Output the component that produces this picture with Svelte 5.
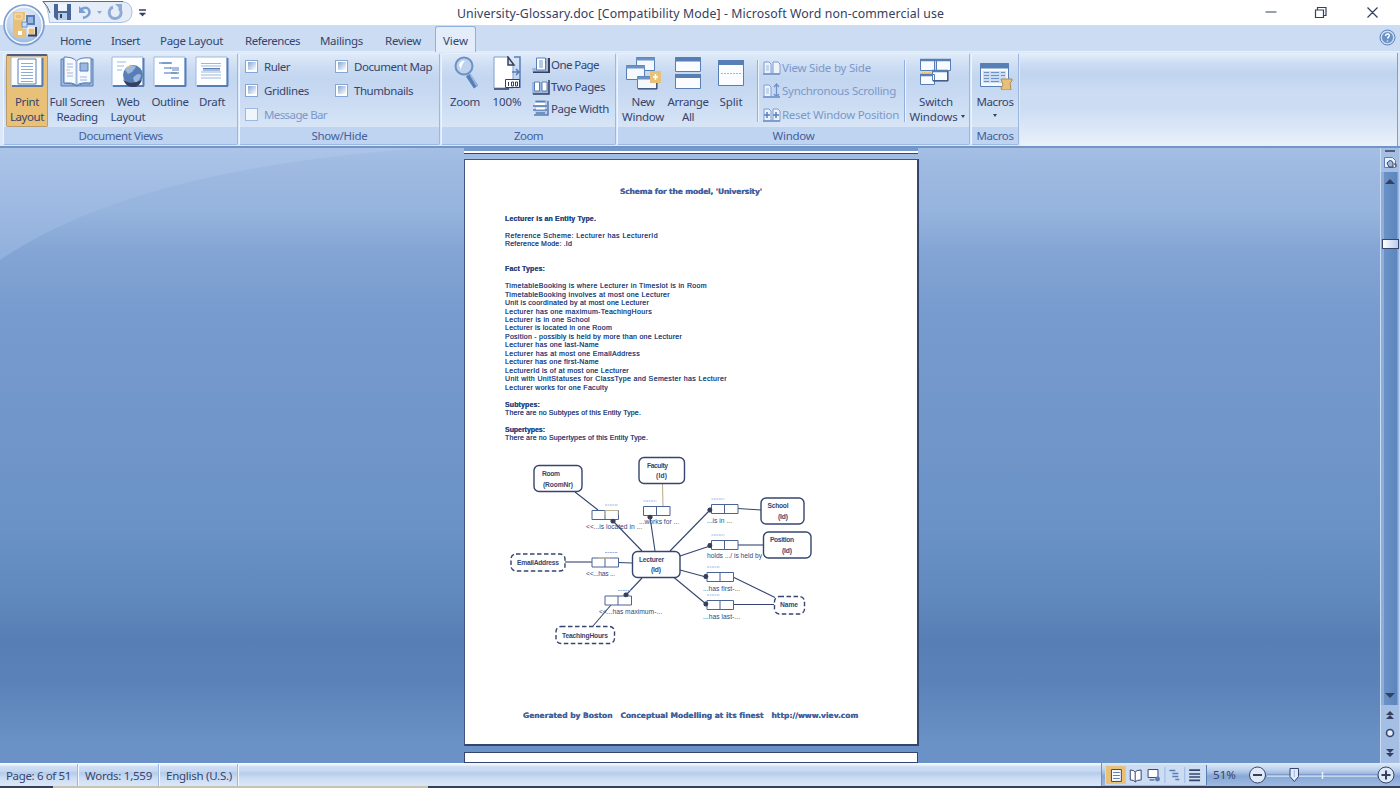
<script>
  // Adjusts tracking so a label occupies its design width.
  function fit(node, w) {
    if (!w) return;
    const n = node.textContent.length;
    const natural = node.getBoundingClientRect().width;
    node.style.letterSpacing = (w - natural) / n + 'px';
  }
  const tabs = [['Home', 31, 60], ['Insert', 29, 20], ['Page Layout', 63, 20], ['References', 55, 22], ['Mailings', 43, 20], ['Review', 36, 22]];
  const lines = [
    ['Lecturer is an Entity Type.', 91, 1], [], ['Reference Scheme: Lecturer has LecturerId', 153], ['Reference Mode: .Id', 67], [], [],
    ['Fact Types:', 40, 1], [],
    ['TimetableBooking is where Lecturer in Timeslot is in Room', 202], ['TimetableBooking involves at most one Lecturer', 165],
    ['Unit is coordinated by at most one Lecturer', 144], ['Lecturer has one maximum-TeachingHours', 147], ['Lecturer is in one School', 85],
    ['Lecturer is located in one Room', 107], ['Position - possibly is held by more than one Lecturer', 177], ['Lecturer has one last-Name', 94],
    ['Lecturer has at most one EmailAddress', 135], ['Lecturer has one first-Name', 94], ['LecturerId is of at most one Lecturer', 124],
    ['Unit with UnitStatuses for ClassType and Semester has Lecturer', 222], ['Lecturer works for one Faculty', 103], [],
    ['Subtypes:', 35, 1], ['There are no Subtypes of this Entity Type.', 136], [], ['Supertypes:', 40, 1], ['There are no Supertypes of this Entity Type.', 143]
  ];
  const entities = [
    [534, 465.5, 48, 26, 'Room', 542, 476, 18, '(RoomNr)', 543, 486.5, 30],
    [639, 457.5, 45.5, 26, 'Faculty', 647, 467.5, 21, '(Id)', 656, 478, 11],
    [632.5, 551.5, 47.5, 26, 'Lecturer', 639, 561.5, 25, '(Id)', 651, 572, 10],
    [761, 498, 43, 26, 'School', 767.5, 508, 21, '(Id)', 778, 519, 10],
    [763.5, 532, 47.5, 26, 'Position', 770, 542, 24, '(Id)', 782, 553, 10]
  ];
  const values = [[511, 554, 54, 17, 'EmailAddress', 517, 564.5, 42], [556, 626.5, 58.5, 17, 'TeachingHours', 562, 637.5, 46], [774.5, 596.5, 30, 17.5, 'Name', 780, 607, 18]];
  const roles = [
    [592, 510.5, 605, '<<...is located in ...', 586, 529, 56], [643.5, 506.5, 643.5, '...works for ...', 639, 524, 40],
    [592, 558, 605, '<<...has ...', 586, 575.5, 29], [605, 596, 618, '<<...has maximum-...', 599, 613.5, 63],
    [711.5, 504.5, 711.5, '...is in ...', 707, 522.5, 25], [711.5, 540.5, 711.5, 'holds .../ is held by', 707, 558, 55],
    [707, 572.5, 707, '...has first-...', 703, 590.5, 37], [707, 600.5, 707, '...has last-...', 703, 618.5, 37]
  ];
  const links = [[575, 492, 598, 510], [613, 521, 642, 551], [650, 517, 655, 551], [565, 562, 592, 562], [618, 562.5, 632, 563], [626, 595, 642, 578], [611, 605, 593, 626], [710, 510, 670, 551], [738, 508.5, 761, 510], [710, 546, 680, 556], [738, 545, 763, 545], [706, 577, 680, 570], [733, 577, 775, 597.5], [706, 604, 674, 577.5], [733, 604.5, 774, 604.5]];
  const dots = [[613, 521], [650, 517], [626, 595], [710, 510], [710, 545.5], [706, 576.5], [706, 604]];
</script>

{#snippet t(text, w)}<span class="t" use:fit={w}>{text}</span>{/snippet}

{#snippet paper()}<path d="M1 1h31v29H1z" fill="#fdfeff" stroke="#9cb8e0" /><path d="M2 30h31M32.500 2v28" stroke="#587fb5" stroke-width="2" />{/snippet}

<div class="app">
  <header class="title">
    <svg class="orb" width="48" height="48" viewBox="0 0 48 48">
      <defs><radialGradient id="og" cx=".5" cy=".3" r=".75"><stop offset="0" stop-color="#e4edf9" /><stop offset=".6" stop-color="#bfd3ee" /><stop offset="1" stop-color="#87a8d8" /></radialGradient></defs>
      <circle cx="24" cy="25" r="20" fill="url(#og)" stroke="#7c9fd0" stroke-width="1.500" /><circle cx="24" cy="25" r="18.200" fill="none" stroke="#fff" stroke-width="1.200" />
      <path d="M13 12h12v8h-2v9h3v8h-10l-3-3z" fill="#e8c078" /><path d="M15 14h7v5h-7z" fill="none" stroke="#f7e4bd" /><path d="M18 31h4v4h-4z" fill="#fff" />
      <path d="M27 16h7v8h-7z" fill="#9cb8e0" stroke="#587fb5" stroke-width="2" /><path d="M22 22h5v5h-5z" fill="#cbdcf3" stroke="#6a92c6" />
      <path d="M28 28h7v7h-7z" fill="#e8c078" stroke="#fff" /><path d="M28 35.500h8V27" fill="none" stroke="#35405f" stroke-width="2" />
    </svg>
    <svg class="qat" width="155" height="25" viewBox="0 0 155 25">
      <path d="M43 1.500Q48 6 49.500 22.500H121Q132 22 132 12T121 1.500z" fill="#e4edf8" stroke="#a9c1e4" /><path d="M43 1.500Q48 6 50 13M43 1.500h80" fill="none" stroke="#5a6a8c" />
      <path d="M54 4h17v16H57l-3-3z" fill="#4a6697" /><path d="M58 4h9v7h-9z" fill="#eff5fc" /><path d="M58 13h9v7h-9z" fill="#b6cbea" /><path d="M60 14h2v4h-2z" fill="#35405f" />
      <path d="M80 10q8-5 9.500 1.500Q90 16 83 18" fill="none" stroke="#7c9ed0" stroke-width="2.500" /><path d="M79 6v7h7z" fill="#7c9ed0" /><path d="M97 11h5l-2.500 3z" fill="#8eabd6" />
      <path d="M119 8a6 6 0 1 1-6-1" fill="none" stroke="#8eabd6" stroke-width="3" /><path d="M115 4h7v7z" fill="#8eabd6" />
      <path d="M139 10h7M139.500 13.500h6" stroke="#35405f" stroke-width="1.300" /><path d="M140 13.500h5l-2.500 3z" fill="#35405f" />
    </svg>
    <h1>{@render t('University-Glossary.doc [Compatibility Mode] - Microsoft Word non-commercial use', 487)}</h1>
    <svg class="win" width="120" height="25" viewBox="1265 0 120 25" fill="none" stroke="#35405f" stroke-width="1.200"><path d="M1265.500 12h11M1315.500 10h8v7.500h-8zM1317.500 10V7.500h8.500v8h-2.500M1367.500 7.500l10 10M1377.500 7.500l-10 10" /></svg>
  </header>

  <nav>
    {#each tabs as [n, w, g]}<span class="tab" style="margin-left:{g}px;width:{w}px">{@render t(n, w)}</span>{/each}
    <span class="tab on">{@render t('View', 25)}</span>
    <svg class="help" width="17" height="17" viewBox="0 0 17 17"><circle cx="8.500" cy="8.500" r="7.500" fill="#cbdcf3" stroke="#587fb5" /><circle cx="8.500" cy="8.500" r="5.500" fill="#6a92c6" /><path d="M6.500 7q.5-2.500 2.500-2 2.500.8.500 3L8.500 9.500M8.500 11.500v1" fill="none" stroke="#fff" stroke-width="1.500" /></svg>
  </nav>

  <div class="ribbon">
    <section style="width:235px">
      <div class="body views">
        <button class="big sel" style="width:42px"><svg width="34" height="32">{@render paper()}<path d="M8 3h18v25H8z" fill="#fff" stroke="#587fb5" /><path d="M11 7.500h12M11 10.500h12M11 13.500h12M11 16.500h12M11 19.500h12M11 22.500h12M11 25.500h12" stroke="#8cabd6" /></svg>{@render t('Print', 24)}{@render t('Layout', 34)}</button>
        <button class="big" style="width:58px"><svg width="34" height="32"><path d="M1 3h3v24q8 0 13 3 4-3 13-2V3h3v27H1z" fill="#9cb8e0" stroke="#587fb5" /><path d="M4 1q9 0 12.500 4Q20 1 31 2v25q-10-1-14 2-5-3-13-2z" fill="#f6f9fe" stroke="#587fb5" /><path d="M16.500 5v24" stroke="#9cb8e0" stroke-width="2" /><path d="M7 8h6M7 11h6M7 17h6M7 20h6M20 21h7M20 24h7" stroke="#9cb8e0" /><path d="M20 7h8v8h-8z" fill="#9cb8e0" stroke="#587fb5" /><path d="M6 14h4" stroke="#e8c078" /></svg>{@render t('Full Screen', 55)}{@render t('Reading', 41)}</button>
        <button class="big" style="width:44px"><svg width="34" height="32">{@render paper()}<path d="M6 6h9M6 10h7M6 14h5" stroke="#9cb8e0" /><circle cx="22" cy="19" r="10" fill="#587fb5" /><path d="M14 14q4-7 11-3l-4 5-4 2zM22 22q5-6 8-3-1 6-6 8z" fill="#9cb8e0" /><path d="M12 23q6 7 19 1-3 8-10 7-7-1-9-8z" fill="#35405f" /><path d="M15 12l5-3" stroke="#e8c078" /></svg>{@render t('Web', 23)}{@render t('Layout', 35)}</button>
        <button class="big" style="width:40px"><svg width="34" height="32">{@render paper()}<path d="M6 7h13M11 12h7M11 17h15M18 22h8" stroke="#9cb8e0" stroke-width="2" /><path d="M9 7h9M17 12h9M19 14h7M18 17h6" stroke="#587fb5" /></svg>{@render t('Outline', 37)}</button>
        <button class="big" style="width:44px"><svg width="34" height="32">{@render paper()}<path d="M6 7.500h20M6 10h20M6 16h20M6 19h20M6 22h20" stroke="#9cb8e0" /><path d="M8 12.500h17M8 14h17" stroke="#587fb5" /></svg>{@render t('Draft', 26)}</button>
      </div>
      <footer>{@render t('Document Views', 84)}</footer>
    </section>
    <section style="width:201px">
      <div class="body checks">
        {#each [['Ruler', 26], ['Document Map', 78], ['Gridlines', 45], ['Thumbnails', 59], ['Message Bar', 63]] as [n, w], i}
          <label class:dim={i == 4}><i></i>{@render t(n, w)}</label>
        {/each}
      </div>
      <footer>{@render t('Show/Hide', 56)}</footer>
    </section>
    <section style="width:175px">
      <div class="body" style="padding-left:3px">
        <button class="big" style="width:40px"><svg width="34" height="34"><path d="M20 19l8 12" stroke="#587fb5" stroke-width="5" /><path d="M22 18l7 12" stroke="#9cb8e0" stroke-width="1.500" /><circle cx="16" cy="10" r="8.500" fill="#bfd3ef" stroke="#6a92c6" stroke-width="2" /><path d="M11 9q2-5 6-4-4 4-4 9z" fill="#fff" /></svg>{@render t('Zoom', 30)}</button>
        <button class="big" style="width:44px"><svg width="34" height="34"><path d="M4 1h14l5 7v24H4z" fill="#fff" stroke="#7d9fd0" /><path d="M18 1l6 8h-6zM4 33h15" fill="#cbdcf3" stroke="#35405f" stroke-width="1.500" /><path d="M24 1h6v31M22 16h7m-3-3 3 3-3 3" fill="none" stroke="#587fb5" stroke-width="1.500" /><path d="M15.500 23.500h14v8h-14z" fill="#fff" stroke="#35405f" /><path d="M18.500 26v4M21.500 26v4h2v-4zM25.500 26v4h2v-4z" fill="none" stroke="#35405f" /></svg>{@render t('100%', 29)}</button>
        <div class="list zl">
          <span><svg width="18" height="16"><path d="M0 11h4V1h12v15H1z" fill="#9cb8e0" /><path d="M1 15.500h16V1" fill="none" stroke="#35405f" stroke-width="2" /><path d="M4.500 1h9v12h-9z" fill="#fff" stroke="#587fb5" /><path d="M7 4h4M7 6h4M7 8h4M7 10h4" stroke="#6a92c6" /></svg>{@render t('One Page', 48)}</span>
          <span><svg width="18" height="16"><path d="M0 3h17v12H0z" fill="#9cb8e0" /><path d="M1 15h16V1" fill="none" stroke="#35405f" stroke-width="1.500" /><path d="M2.500 3h5v9h-5zM10 3h5v9h-5z" fill="#fff" stroke="#587fb5" /></svg>{@render t('Two Pages', 54)}</span>
          <span><svg width="18" height="16"><path d="M3 0h13v15H3z" fill="#b6cbea" /><path d="M2 15h14V1" fill="none" stroke="#587fb5" stroke-width="1.500" /><path d="M3.500 1.500h10M1 6h14M1 10h14M4 13h9" stroke="#587fb5" stroke-width="1.400" /><path d="M3 3h10v2H3zM4 7.500h9v2H4z" fill="#fff" /></svg>{@render t('Page Width', 58)}</span>
        </div>
      </div>
      <footer>{@render t('Zoom', 29)}</footer>
    </section>
    <section style="width:353px">
      <div class="body" style="padding-left:1px">
        <button class="big" style="width:48px"><svg width="36" height="34"><g fill="#f5f9fe" stroke="#587fb5"><path d="M11.500 1.500h18v13h-18z" /><path d="M1.500 9.500h18v14h-18z" /><path d="M12.500 20.500h19v12h-19z" /></g><path d="M11 3h19M1 11h19M12 22h20" stroke="#6a92c6" stroke-width="3" /><path d="M13 33h19V21" fill="none" stroke="#35405f" /><path d="M25 15h11v12H25z" fill="#e8c078" /><path d="M30.500 18v6M28 21h5" stroke="#fff" stroke-width="1.500" /></svg>{@render t('New', 23)}{@render t('Window', 42)}</button>
        <button class="big" style="width:42px"><svg width="28" height="34"><path d="M1.500 1.500h25v14h-25zM1.500 18.500h25v14h-25z" fill="#fafcff" stroke="#587fb5" /><path d="M1 3.500h26M1 20h26" stroke="#587fb5" stroke-width="4" /></svg>{@render t('Arrange', 41)}{@render t('All', 12)}</button>
        <button class="big" style="width:44px"><svg width="28" height="34"><path d="M1.500 4.500h25v25h-25z" fill="#fafcff" stroke="#587fb5" /><path d="M1 6.500h26" stroke="#587fb5" stroke-width="5" /><path d="M4 17.500h20" stroke="#9cb8e0" stroke-dasharray="2 1" /></svg>{@render t('Split', 23)}</button>
        <i class="sep" style="margin-left:4px"></i>
        <div class="list wl dim">
          {#each [['View Side by Side', 89], ['Synchronous Scrolling', 114], ['Reset Window Position', 117]] as [n, w], i}
            <span><svg width="18" height="15"><path d="M1 2h5l2 2v10H1z" fill="#edf3fb" stroke="#7c9ed0" />{#if i == 1}<path d="M13.500 1v13M11 4l2.500-3L16 4M11 11l2.500 3 2.500-3" fill="none" stroke="#6a92c6" stroke-width="1.300" />{:else}<path d="M10 2h5l2 2v10h-7z" fill="#edf3fb" stroke="#7c9ed0" />{/if}{#if i == 2}<path d="M1 8h6M4 5v6M10 8h6M13 5v6" stroke="#587fb5" stroke-width="1.500" />{:else}<path d="M3 6h3M3 8h3M3 10h3" stroke="#9cb8e0" />{/if}<path d="M0 14h17" stroke="#7c9ed0" stroke-width="2" /></svg>{@render t(n, w)}</span>
          {/each}
        </div>
        <i class="sep" style="margin-left:-1px"></i>
        <button class="big" style="width:60px"><svg width="34" height="34"><g fill="#f8fbff" stroke="#587fb5"><path d="M1.500 3.500h14v11h-14zM17.500 3.500h14v11h-14z" /><path d="M1.500 18.500h14v10h-14zM13.500 14.500h15v10h-15z" /></g><path d="M1 4h31M1 19h12M13 15h16" stroke="#587fb5" stroke-width="2.500" /><path d="M14 25h15V15" fill="none" stroke="#35405f" /><path d="M3 17h10" stroke="#e8c078" stroke-dasharray="1 1" stroke-width="2" /></svg>{@render t('Switch', 34)}<span class="row">{@render t('Windows', 48)}<b class="car"></b></span></button>
      </div>
      <footer>{@render t('Window', 42)}</footer>
    </section>
    <section style="width:48px">
      <div class="body">
        <button class="big" style="width:46px"><svg width="34" height="34" style="margin-left:2px"><path d="M1.500 7.500h28v23h-28z" fill="#f5f9fe" stroke="#587fb5" /><path d="M1 10h29" stroke="#587fb5" stroke-width="5" /><path d="M4 15h23v12H4z" fill="#cbdcf3" /><path d="M5 16.500h5M5 19.500h5M5 22.500h5M5 25.500h5M12 16.500h8M12 19.500h8M12 22.500h8M12 25.500h8M22 16.500h4M22 19.500h4" stroke="#6a92c6" /><path d="M22 23h11v2l-2 2 1 7h-9l-1-2 2-3z" fill="#e8c078" stroke="#a98c5a" /></svg>{@render t('Macros', 37)}<b class="car" style="margin-top:5px"></b></button>
      </div>
      <footer>{@render t('Macros', 37)}</footer>
    </section>
    <div class="rest"></div>
  </div>

  <main>
    <svg class="sweep" width="470" height="130" preserveAspectRatio="none"><defs><linearGradient id="sw" x1="0" y1="0" x2="0" y2="1"><stop offset="0" stop-color="#abc4e8" /><stop offset="1" stop-color="#91b0dc" /></linearGradient></defs><path d="M0 0H425Q135 20 0 112z" fill="url(#sw)" /></svg>
    <div class="sheets">
      <div class="prev"></div>
      <article>
        <h2>{@render t("Schema for the model, 'University'", 142)}</h2>
        {#each lines as [n, w, h]}<p class:h>{#if n}{@render t(n, w)}{/if}</p>{/each}
        <svg class="diagram" width="320" height="200" viewBox="505 450 320 200">
          <g stroke="#35456f" stroke-width="1.100">{#each links as [a, b, c, d]}<line x1={a} y1={b} x2={c} y2={d} />{/each}</g>
          <path d="M662.500 484l.5 22" stroke="#b9a98c" />
          {#each dots as [x, y]}<circle cx={x} cy={y} r="2.500" fill="#35405f" />{/each}
          {#each entities as [x, y, w, h, a, ax, ay, aw, b, bx, by, bw]}
            <rect {x} {y} width={w} height={h} rx="5" fill="#fff" stroke="#35456f" stroke-width="1.400" />
            <text x={ax} y={ay} textLength={aw}>{a}</text><text x={bx} y={by} textLength={bw}>{b}</text>
          {/each}
          {#each values as [x, y, w, h, a, ax, ay, aw]}
            <rect {x} {y} width={w} height={h} rx="5" fill="#fff" stroke="#35456f" stroke-width="1.400" stroke-dasharray="4.500 2.500" /><text x={ax} y={ay} textLength={aw}>{a}</text>
          {/each}
          {#each roles as [x, y, ux, a, ax, ay, aw]}
            <path d="M{x} {y}h26.500v9h-26.500zM{x + 13} {y}v9" fill="#fff" stroke="#4a6394" /><path d="M{ux} {y - 5.500}h13" stroke="#9cb8e0" stroke-dasharray="2 .5" />
            <text class="rd" x={ax} y={ay} textLength={aw}>{a}</text>
          {/each}
          {#each dots as [x, y]}<circle cx={x} cy={y} r="2.300" fill="#35405f" />{/each}
          <path d="M605 515v-4.500h13v4.500M598 558h12" fill="none" stroke="#e0c594" stroke-width=".8" />
        </svg>
        <div class="foot">{@render t('Generated by Boston \u00a0 Conceptual Modelling at its finest \u00a0 http://www.viev.com', 335)}</div>
      </article>
      <div class="next"></div>
    </div>
    <aside>
      <div class="cap"><svg width="19" height="24"><path d="M4 3h10" stroke="#35405f" stroke-width="1.500" /><path d="M3.500 9.500h8l3 3v7h-11z" fill="#e8f0fb" stroke="#587fb5" /><path d="M6 15q4-5 6 0v4H8zM13 16h2v3" fill="#9cb8e0" stroke="#35405f" /></svg></div>
      <div class="track"><b class="up"></b><b class="thumb"></b><b class="down"></b></div>
      <div class="browse"><svg width="19" height="57"><path d="M5 10l4-4 4 4zM5 14l4-4 4 4z" fill="#35405f" /><circle cx="9" cy="28" r="3.500" fill="#e4edf9" stroke="#35456f" stroke-width="1.600" /><path d="M5 44h8l-4 4zM5 48h8l-4 4z" fill="#35405f" /></svg></div>
    </aside>
  </main>

  <div class="status">
    <span class="s" style="width:79px;padding-left:6px">{@render t('Page: 6 of 51', 65)}</span>
    <span class="s" style="width:81px;padding-left:6px">{@render t('Words: 1,559', 67)}</span>
    <span class="s" style="width:79px;padding-left:6px">{@render t('English (U.S.)', 66)}</span>
    <div class="zoombar">
      <svg class="modes" width="102" height="20" viewBox="1105 764 102 20">
        <path d="M1106 765h20v18h-20z" fill="#e8c078" /><path d="M1111.500 768.500h10v12h-10z" fill="#fff" stroke="#35456f" /><path d="M1113 771.500h7M1113 774.500h7M1113 777.500h7" stroke="#587fb5" />
        <path d="M1130.500 769q4 0 5 2 1-2 6-2v10q-5 0-6 2-1-2-5-2zM1135.500 771v10" fill="#fff" stroke="#35456f" /><path d="M1148.500 768.500h10v8h-10zM1150 779h5" fill="#fff" stroke="#35456f" /><circle cx="1158" cy="778" r="2.500" fill="#587fb5" />
        <path d="M1170 769.500h6M1173 772.500h6M1173 775.500h6M1176 778.500h4" stroke="#587fb5" stroke-width="1.500" /><path d="M1165.500 766v16M1185.500 766v16" stroke="#9cb8e0" /><path d="M1190 769h11M1190 773h11M1190 776h11M1190 779.500h11" stroke="#35456f" stroke-width="1.700" />
      </svg>
      <span class="pct">{@render t('51%', 23)}</span>
      <svg width="152" height="22" viewBox="1248 763 152 22">
        <path d="M1267 775h110" stroke="#d8e5f6" stroke-width="1.500" /><path d="M1267 773.800h110" stroke="#7295c8" /><path d="M1322.500 771v7" stroke="#e8f0fb" stroke-width="1.500" />
        <g fill="#dfe9f7" stroke="#35456f"><circle cx="1257.500" cy="774" r="8" /><circle cx="1386" cy="774" r="8" /><path d="M1290 767.500h8.500v8l-4.200 5-4.300-5z" /></g>
        <path d="M1253 774h9M1381.500 774h9M1386 769.500v9" stroke="#35405f" stroke-width="2" /><path d="M1294.300 769v7" stroke="#9cb8e0" />
      </svg>
    </div>
  </div>
  <div class="edge"><i></i></div>
</div>

<style>
  :global(body) { margin: 0; overflow: hidden; }
  .app { width: 1400px; height: 788px; display: flex; flex-direction: column; background: #fff; color: #35456d; font: 11.500px/15px "Noto Sans", "Open Sans", sans-serif; position: relative; overflow: hidden; }
  * { box-sizing: border-box; }
  .t { white-space: pre; display: inline-block; }
  svg { display: block; flex: none; }
  .title { height: 25px; display: flex; flex: none; }
  .orb { position: absolute; left: 0; top: 0; z-index: 2; }
  .qat { margin-right: 302px; }
  h1 { font: inherit; font-size: 12.300px; line-height: 28px; margin: 0; width: 487px; color: #35405f; }
  .win { margin-left: 321px; }
  nav { height: 27px; flex: none; background: #cbdcf3; display: flex; border-bottom: 1px solid #e6effa; }
  .tab { padding-top: 8px; white-space: nowrap; flex: none; }
  .on { margin-left: 14px; width: 41px; height: 27px; padding: 6px 0 0 7px; margin-top: 1px; border: 1px solid #8fafdc; border-bottom: 0; border-radius: 3px 3px 0 0; background: #e3edf9; }
  .help { margin: 4px 4px 0 auto; }
  .ribbon { height: 96px; flex: none; display: flex; gap: 1px; padding: 1px 2px 0 3px; background: #dce8f7; border-bottom: 2px solid #7195c8; }
  section { display: flex; flex-direction: column; flex: none; height: 92px; border: 1px solid #9cb8e0; border-top-color: #e8f0fa; border-left-color: #eef4fc; border-radius: 2px; background: linear-gradient(#dfeaf8 0, #cbdcf3 15%, #c3d6f0 28%, #cbdcf3 55%, #e0ebf8 100%); }
  .body { height: 73px; display: flex; }
  .views { padding-left: 2px; }
  section footer { height: 17px; background: #bfd4f0; display: flex; justify-content: center; align-items: center; color: #45619a; }
  .big { border: 0; background: none; padding: 2px 0 0; font: inherit; color: inherit; display: flex; flex-direction: column; align-items: center; flex: none; height: 73px; overflow: visible; }
  .big svg { height: 34px; margin-bottom: 4px; }
  .big > .t { text-align: center; }
  .big.sel { background: #e8c078; border: 1px solid #b99b6c; border-top: 2px solid #55597a; border-radius: 2px; padding-top: 0; }
  .row { display: flex; align-items: center; gap: 3px; padding-left: 2px; }
  .car { border: 2px solid transparent; border-top: 3px solid #35405f; border-bottom: 0; }
  .checks { display: grid; grid-template-columns: 90px 1fr; grid-template-rows: 24px 24px 24px; padding: 0 0 1px 5px; }
  label { display: flex; align-items: center; gap: 6px; white-space: nowrap; }
  label i { width: 13px; height: 13px; border: 1px solid #86a7d6; background: linear-gradient(135deg, #86a7d6, #fff) center/8px 8px no-repeat #fff; outline: 0; }
  label.dim i { background: #f0f5fc; border-color: #9cb8e0; }
  .dim { color: #7b98c9; }
  .list { display: flex; flex-direction: column; }
  .list span:not(.t) { display: flex; align-items: center; gap: 1px; flex: none; white-space: nowrap; }
  .zl { padding: 0 0 0 3px; }
  .zl span:not(.t) { height: 21.800px; }
  .wl { width: 146px; padding: 2px 0 0 4px; }
  .wl span:not(.t) { height: 23.300px; }
  .sep { width: 2px; height: 62px; margin-top: 6px; flex: none; background: #8fafdc; border-right: 1px solid #eef4fc; }
  .rest { flex: 1; height: 93px; background: linear-gradient(#e6effa 0, #cbdcf3 12%, #c0d4ef 23%, #cbdcf3 40%, #cbdcf3 58%, #eaf1fa 100%); border-right: 1px solid #7c9fd0; }
  main { height: 615px; flex: none; display: flex; position: relative; background: linear-gradient(#a4bee4 0, #9cb8e0 5%, #96b4dd 10%, #83a5d5 17%, #779bce 27%, #7196ca 45%, #6a92c6 62%, #6089be 73%, #587fb5 80%, #5b83b9 87%, #6a92c6 97%); }
  .sweep { position: absolute; left: 0; top: 0; }
  .sheets { margin-left: 464px; width: 455px; display: flex; flex-direction: column; overflow: hidden; position: relative; }
  .prev { height: 6px; width: 454px; flex: none; border-top: 3px solid #7599cc; border-bottom: 1px solid #35456f; background: #fff; margin-bottom: 5px; }
  article { width: 455px; height: 587px; flex: none; background: #fff; border: 1px solid #46557f; border-right: 2px solid #35456f; border-bottom: 2px solid #35456f; padding: 27px 0 0 40px; font: 7px/8.460px "Liberation Sans", Arial, sans-serif; color: #2f4a80; text-shadow: 0 0 .4px #2f4a80; }
  h2 { font: bold 7.500px/10px "DejaVu Sans", Verdana, sans-serif; margin: 0 0 17.600px 115px; color: #4565a2; white-space: nowrap; }
  p { margin: 0; height: 8.460px; white-space: nowrap; font-weight: 400; }
  p.h { font-weight: 700; }
  .diagram { margin-top: 7.400px; }
  text { font-size: 6.700px; font-weight: 700; fill: #35456f; text-shadow: none; }
  .rd { font-weight: 400; fill: #2f4a80; }
  .foot { margin: 60.500px 0 0 18px; font: bold 7.500px/10px "DejaVu Sans", Verdana, sans-serif; color: #4565a2; white-space: nowrap; }
  .next { width: 454px; margin-top: 6px; height: 11px; flex: none; background: #fff; border: 1px solid #35456f; }
  aside { margin-left: auto; width: 20px; display: flex; flex-direction: column; border-left: 1px solid #cbdcf3; border-right: 1px solid #b9cfed; background: #a4bee4; }
  .cap { height: 24px; }
  .track { height: 533px; background: linear-gradient(90deg, #8eadd9 0 3px, #6a92c6 3px, #5d86be 16px, #9cb8e0 17px); display: flex; flex-direction: column; align-items: center; }
  .up { border: 5px solid transparent; border-bottom: 5px solid #35405f; border-top: 0; margin: 7px 0 55px; }
  .thumb { width: 17px; height: 10px; border: 1px solid #35456f; background: linear-gradient(90deg, #fff, #b9cdeb); }
  .down { border: 5px solid transparent; border-top: 5px solid #35405f; border-bottom: 0; margin: auto 0 7px; }
  .status { height: 23px; flex: none; display: flex; background: linear-gradient(#f3f8fd 0 1px, #cbdcf3 4px, #c7d9f1 8px, #b5cbea 10px, #cbdcf3 15px, #d9e6f6 22px); }
  .s { padding-top: 4px; height: 22px; margin-top: 1px; border-right: 1px solid #f5f9fe; box-shadow: -1px 0 #9cb8e0 inset; white-space: nowrap; }
  .zoombar { margin-left: auto; width: 299px; display: flex; align-items: center; background: linear-gradient(#e0ebf8, #b5cbea 8px, #86a7d6 13px, #9cb8e0 22px); border-left: 1px solid #6a92c6; padding-left: 3px; }
  .modes { background: #cbdcf3; border-right: 1px solid #587fb5; }
  .pct { width: 41px; padding-left: 6px; }
  .edge { height: 2px; background: #35405f; flex: none; }
  .edge i { display: block; margin-left: 53px; width: 375px; height: 2px; background: #c8c3b4; }
</style>
